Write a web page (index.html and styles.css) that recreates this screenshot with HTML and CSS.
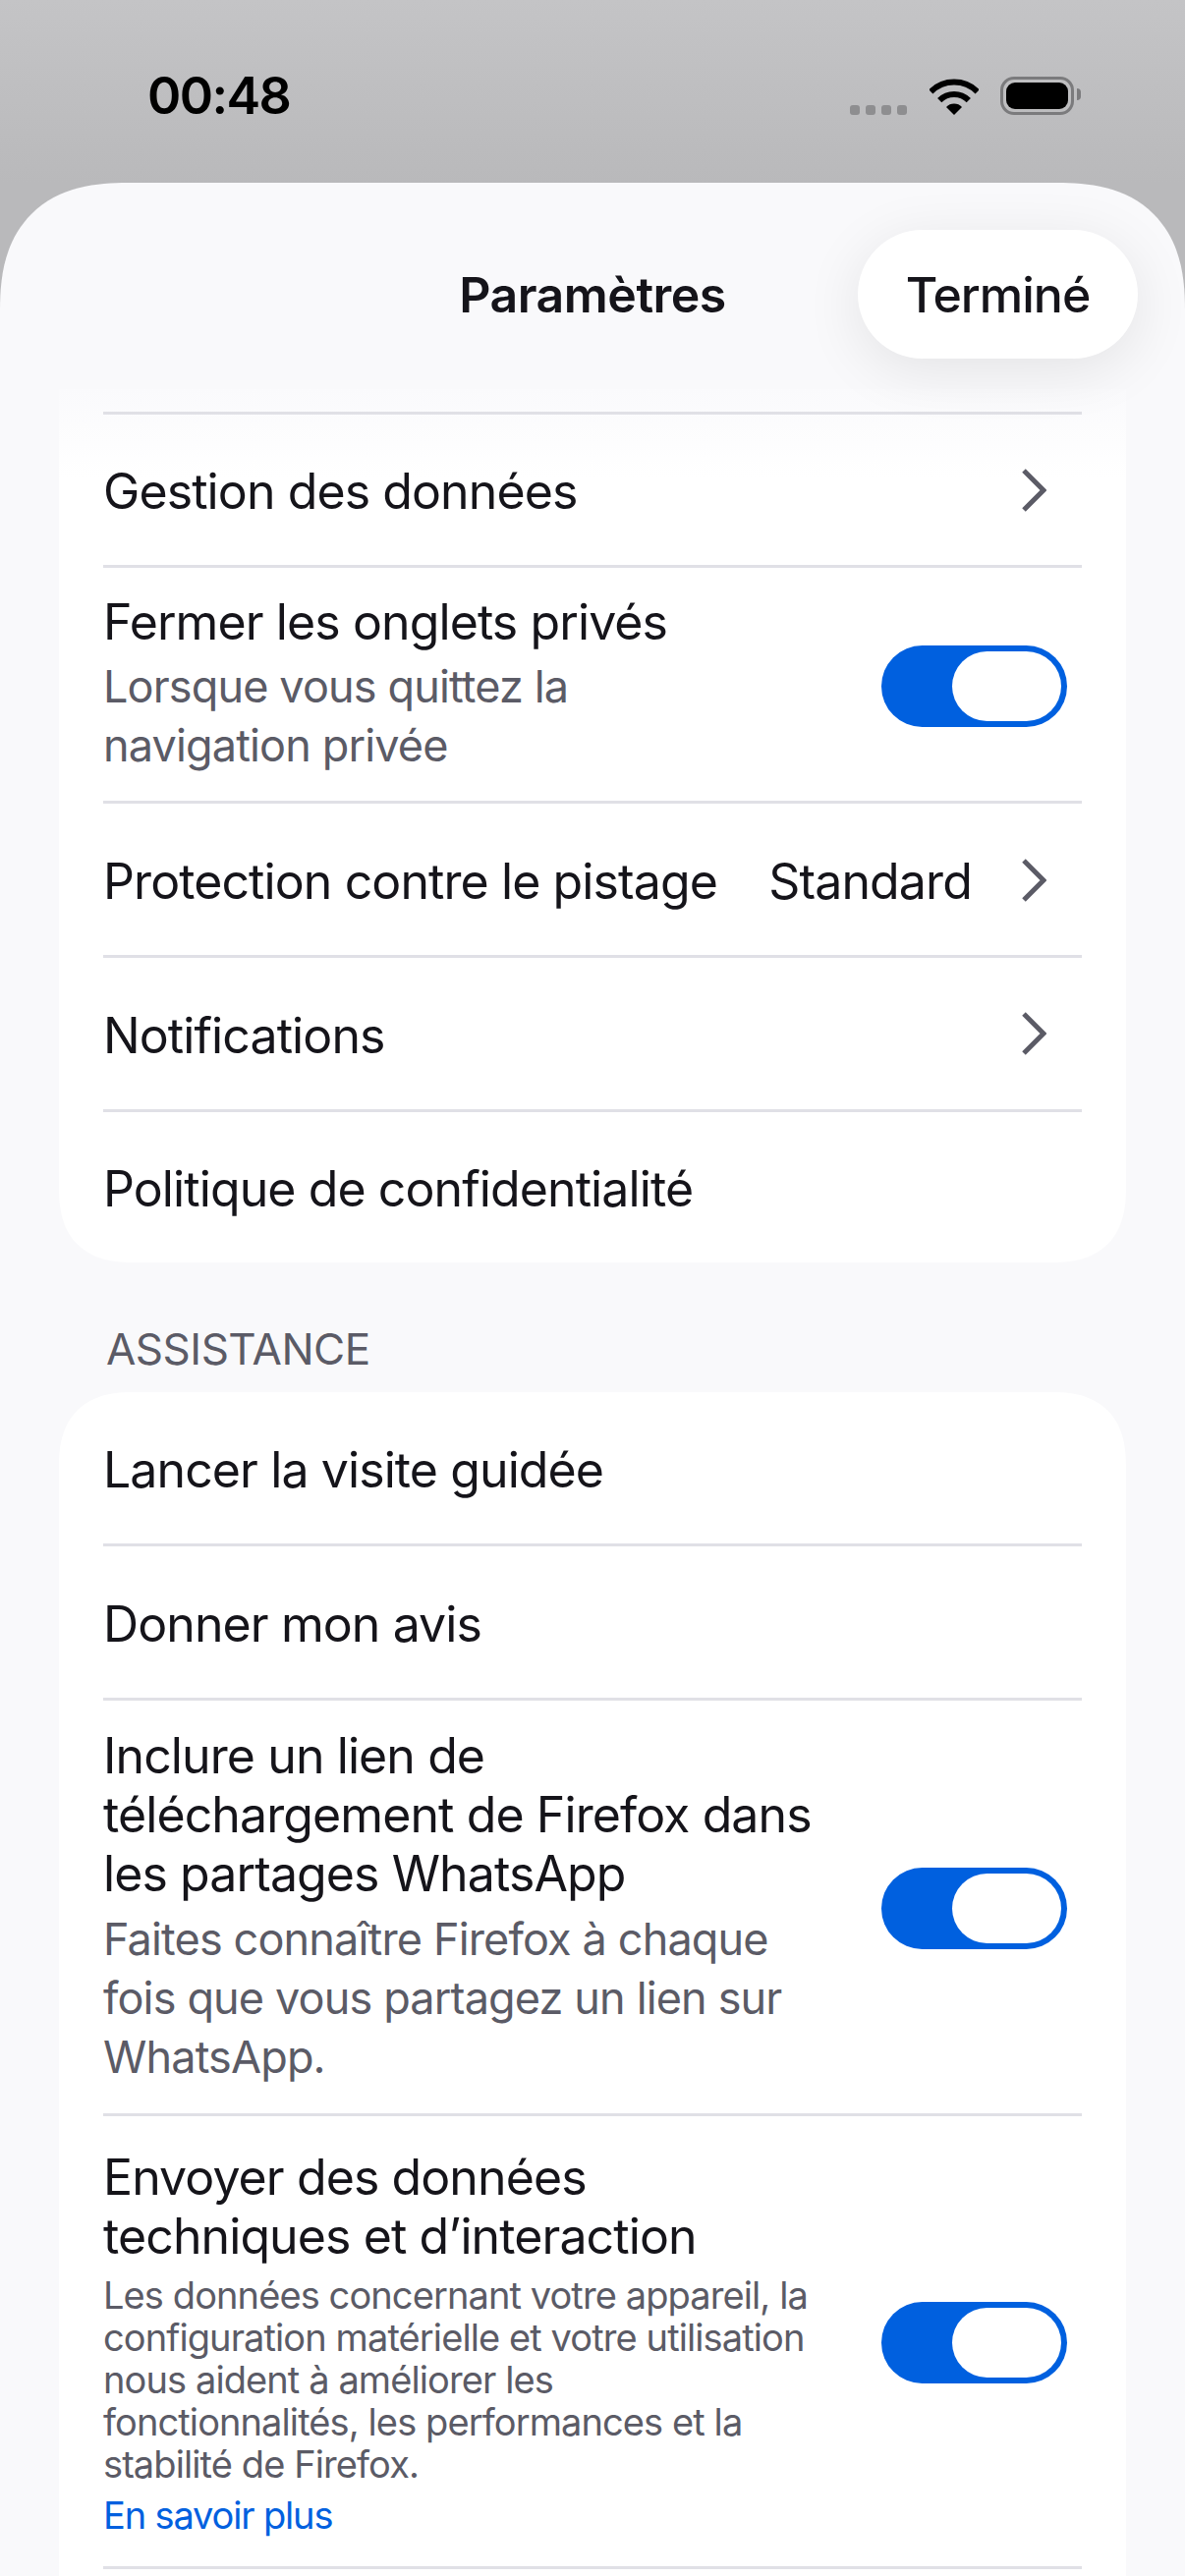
FILE: index.html
```html
<!DOCTYPE html>
<html lang="fr">
<head>
    <meta charset="UTF-8">
    <meta name="viewport" content="width=device-width, initial-scale=1.0">
    <title>Paramètres</title>
    <link rel="stylesheet" href="styles.css">
</head>
<body>
<div class="status-bar">
    <span class="time">00:48</span>
    <div class="status-icons">
        <div class="signal"><i></i><i></i><i></i><i></i></div>
        <svg class="wifi" width="50" height="37" viewBox="0 0 50 37">
            <path d="M1.3 13.3A33.5 33.5 0 0 1 48.7 13.3" fill="none" stroke="#000" stroke-width="6"/>
            <path d="M10.2 22.2A21 21 0 0 1 39.8 22.2" fill="none" stroke="#000" stroke-width="6"/>
            <path d="M25 37L17 29A11 11 0 0 1 33 29Z" fill="#000"/>
        </svg>
        <div class="battery"><div class="battery-fill"></div></div>
    </div>
</div>

<div class="sheet">
    <div class="nav">
        <span class="nav-title">Paramètres</span>
        <button class="done-btn">Terminé</button>
    </div>

    <div class="card card-scrolled">
        <div class="row">
            <span class="label">Gestion des données</span>
            <svg class="chevron" width="25" height="44" viewBox="0 0 25 44"><path d="M2 2L22 22L2 42" fill="none" stroke="#5b5b66" stroke-width="5"/></svg>
        </div>
        <div class="row">
            <div class="row-text">
                <div class="label">Fermer les onglets privés</div>
                <div class="sub">Lorsque vous quittez la<br>navigation privée</div>
            </div>
            <div class="toggle"><div class="knob"></div></div>
        </div>
        <div class="row">
            <span class="label">Protection contre le pistage</span>
            <span class="value">Standard</span>
            <svg class="chevron" width="25" height="44" viewBox="0 0 25 44"><path d="M2 2L22 22L2 42" fill="none" stroke="#5b5b66" stroke-width="5"/></svg>
        </div>
        <div class="row">
            <span class="label">Notifications</span>
            <svg class="chevron" width="25" height="44" viewBox="0 0 25 44"><path d="M2 2L22 22L2 42" fill="none" stroke="#5b5b66" stroke-width="5"/></svg>
        </div>
        <div class="row">
            <span class="label">Politique de confidentialité</span>
        </div>
    </div>

    <div class="section-title">ASSISTANCE</div>

    <div class="card">
        <div class="row row-first">
            <span class="label">Lancer la visite guidée</span>
        </div>
        <div class="row">
            <span class="label">Donner mon avis</span>
        </div>
        <div class="row">
            <div class="row-text row-text-tall">
                <div class="label">Inclure un lien de<br>téléchargement de Firefox dans<br>les partages WhatsApp</div>
                <div class="sub">Faites connaître Firefox à chaque<br>fois que vous partagez un lien sur<br>WhatsApp.</div>
            </div>
            <div class="toggle"><div class="knob"></div></div>
        </div>
        <div class="row">
            <div class="row-text row-text-long">
                <div class="label">Envoyer des données<br>techniques et d’interaction</div>
                <div class="small">Les données concernant votre appareil, la<br>configuration matérielle et votre utilisation<br>nous aident à améliorer les<br>fonctionnalités, les performances et la<br>stabilité de Firefox.</div>
                <a class="small-link" href="#">En savoir plus</a>
            </div>
            <div class="toggle"><div class="knob"></div></div>
        </div>
        <div class="row"></div>
    </div>
</div>
</body>
</html>
```

FILE: styles.css
```css
* {
    box-sizing: border-box;
}

html, body {
    height: 2622px;
}

body {
    margin: 0;
    overflow: hidden;
    font-family: Inter, "Liberation Sans", sans-serif;
    color: #15141a;
    background: linear-gradient(to bottom, #c4c4c6, #b9b9bb 186px);
}

.status-bar {
    height: 186px;
    display: flex;
    align-items: flex-start;
    justify-content: space-between;
    padding: 71px 113px 0 150px;
}

.time {
    font-size: 52px;
    line-height: 54px;
    font-weight: 600;
    letter-spacing: -1.6px;
    color: #000;
}

.status-icons {
    display: flex;
    align-items: flex-end;
    padding-top: 7px;
}

.signal {
    display: flex;
    gap: 6px;
    margin-right: 23px;
}

.signal i {
    width: 10px;
    height: 10px;
    border-radius: 3px;
    background: #8e8e90;
}

.wifi {
    margin-right: 22px;
}

.battery {
    position: relative;
    width: 75px;
    height: 39px;
    padding: 3px;
    border: 3px solid #7b7b7d;
    border-radius: 14px;
}

.battery::after {
    content: "";
    position: absolute;
    right: -10px;
    top: 9px;
    width: 4px;
    height: 12px;
    border-radius: 0 4px 4px 0;
    background: #7b7b7d;
}

.battery-fill {
    height: 100%;
    border-radius: 9px;
    background: #000;
}

.sheet {
    height: 2436px;
    background: #f9f9fb;
    border-radius: 114px 114px 0 0;
    overflow: hidden;
}

.nav {
    position: relative;
    z-index: 1;
    height: 210px;
    padding-top: 84px;
    text-align: center;
}

.nav-title {
    font-size: 50px;
    line-height: 60px;
    font-weight: 600;
    letter-spacing: -0.5px;
}

.done-btn {
    position: absolute;
    top: 48px;
    right: 48px;
    width: 285px;
    height: 131px;
    border: none;
    border-radius: 66px;
    background: #fff;
    color: #15141a;
    font-family: inherit;
    font-size: 50px;
    font-weight: 500;
    letter-spacing: -1px;
    box-shadow: 0 12px 60px rgba(0, 0, 0, 0.09);
}

.card {
    margin: 0 60px;
    background: #fff;
    border-radius: 66px;
}

.card-scrolled {
    padding-top: 22.6px;
    border-radius: 0 0 66px 66px;
    background: linear-gradient(to bottom, #fafafc, #fff 90px);
}

.row {
    display: flex;
    align-items: center;
    margin: 0 45px;
    padding-top: 4px;
    min-height: 156.67px;
    border-top: 3px solid #e0e0e6;
}

.row-first {
    border-top: none;
    min-height: 154px;
}

.row-text {
    flex: 1;
    padding: 21px 0 26px;
}

.row-text-tall {
    padding: 22px 0 27px;
}

.row-text-tall .sub {
    margin-top: 7px;
}

.row-text-long {
    padding: 28px 0 30px;
}

.label {
    flex: 1;
    font-size: 50px;
    line-height: 60px;
    letter-spacing: -0.9px;
}

.sub {
    margin-top: 6px;
    font-size: 45px;
    line-height: 60px;
    color: #5b5b66;
    letter-spacing: -0.85px;
}

.small {
    margin-top: 9px;
    font-size: 38px;
    line-height: 43px;
    color: #5b5b66;
    letter-spacing: -0.9px;
}

.small-link {
    display: block;
    margin-top: 9px;
    font-size: 38px;
    line-height: 43px;
    color: #0060df;
    text-decoration: none;
    letter-spacing: -1.15px;
}

.value {
    font-size: 50px;
    line-height: 60px;
    letter-spacing: -0.85px;
    margin-right: 51px;
}

.chevron {
    flex: none;
    margin: 0 36px 3px 0;
}

.toggle {
    flex: none;
    width: 189px;
    height: 83px;
    margin-right: 15px;
    padding: 6px;
    display: flex;
    justify-content: flex-end;
    border-radius: 42px;
    background: #0060df;
}

.knob {
    width: 111px;
    height: 71px;
    border-radius: 36px;
    background: #fff;
}

.section-title {
    height: 132px;
    padding: 63px 0 0 108px;
    font-size: 44px;
    line-height: 50px;
    color: #5b5b66;
    letter-spacing: -0.5px;
}

/* iOS style continuous corners where the browser has them */
@supports (corner-shape: superellipse(1.3)) {
    .sheet {
        border-radius: 130px 130px 0 0;
        corner-shape: superellipse(1.3);
    }

    .card {
        border-radius: 76px;
        corner-shape: superellipse(1.3);
    }

    .card-scrolled {
        border-radius: 0 0 76px 76px;
    }
}
```
